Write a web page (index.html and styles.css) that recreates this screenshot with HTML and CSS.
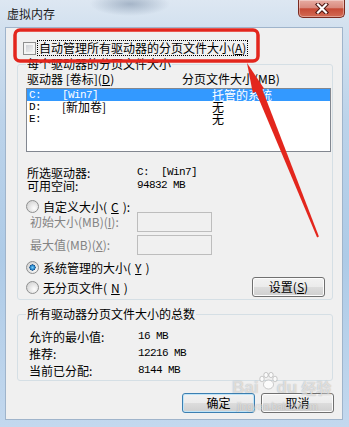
FILE: index.html
```html
<!DOCTYPE html>
<html lang="zh-CN">
<head>
    <meta charset="UTF-8">
    <title>虚拟内存</title>
    <link rel="stylesheet" href="styles.css">
</head>
<body>

    <div class="window">
        <div class="titlebar">
            <span class="title">虚拟内存</span>
            <button class="close" title="关闭">
                <svg width="14" height="11" viewBox="0 0 14 11">
                    <path d="M3 1.5 L11 9.5 M11 1.5 L3 9.5" stroke="#4a1510" stroke-width="4.2" stroke-linecap="square" fill="none"/>
                    <path d="M3 1.5 L11 9.5 M11 1.5 L3 9.5" stroke="#fff" stroke-width="2.2" stroke-linecap="square" fill="none"/>
                </svg>
            </button>
        </div>

        <div class="client">
            <label class="auto-row">
                <span class="checkbox"></span>
                <span class="focus">自动管理所有驱动器的分页文件大小(<u>A</u>)</span>
            </label>

            <!-- Per drive settings -->
            <fieldset class="group">
                <legend>每个驱动器的分页文件大小</legend>
                <div class="list-head">
                    <span class="col-drive">驱动器 [卷标](<u>D</u>)</span>
                    <span>分页文件大小(MB)</span>
                </div>
                <ul class="drive-list">
                    <li class="selected"><span class="d-letter mono">C:</span><span class="d-label mono">[Win7]</span><span>托管的系统</span></li>
                    <li><span class="d-letter mono">D:</span><span class="d-label">[新加卷]</span><span>无</span></li>
                    <li><span class="d-letter mono">E:</span><span class="d-label"></span><span>无</span></li>
                </ul>

                <dl class="info">
                    <dt>所选驱动器:</dt><dd class="mono">C:  [Win7]</dd>
                    <dt>可用空间:</dt><dd class="mono">94832 MB</dd>
                </dl>

                <label class="radio radio-custom"><span class="dot"></span>自定义大小(<u>C</u>):</label>
                <div class="size-fields">
                    <label class="disabled">初始大小(MB)(<u>I</u>):</label>
                    <input type="text" disabled>
                    <label class="disabled">最大值(MB)(<u>X</u>):</label>
                    <input type="text" disabled>
                </div>
                <label class="radio radio-system"><span class="dot checked"></span>系统管理的大小(<u>Y</u>)</label>
                <div class="last-row">
                    <label class="radio"><span class="dot"></span>无分页文件(<u>N</u>)</label>
                    <button class="btn btn-set">设置(<u>S</u>)</button>
                </div>
            </fieldset>

            <!-- Totals -->
            <fieldset class="group totals">
                <legend>所有驱动器分页文件大小的总数</legend>
                <dl class="totals-grid">
                    <dt>允许的最小值:</dt><dd class="mono">16 MB</dd>
                    <dt>推荐:</dt><dd class="mono">12216 MB</dd>
                    <dt>当前已分配:</dt><dd class="mono">8144 MB</dd>
                </dl>
            </fieldset>

            <div class="actions">
                <button class="btn btn-default">确定</button>
                <button class="btn">取消</button>
            </div>
        </div>

        <!-- watermark -->
        <div class="watermark">
            <div class="wm-logo">Bai<svg width="20" height="18" viewBox="0 0 20 18"><g fill="rgba(255,255,255,0.7)" stroke="rgba(120,120,120,0.45)" stroke-width="0.8"><ellipse cx="4" cy="7" rx="2.2" ry="2.8"/><ellipse cx="8" cy="3" rx="2.2" ry="2.6"/><ellipse cx="13" cy="3" rx="2.2" ry="2.6"/><ellipse cx="17" cy="7" rx="2.2" ry="2.8"/><ellipse cx="10.5" cy="12.5" rx="5" ry="4.5"/></g></svg>du<span class="wm-cn">经验</span></div>
            <div class="wm-url">jingyan.baidu.com</div>
        </div>

        <!-- red annotation -->
        <svg class="annotation" width="349" height="427" viewBox="0 0 349 427">
            <rect x="15" y="30" width="243" height="31" rx="5" fill="none" stroke="#e3261d" stroke-width="3.5"/>
            <polygon points="261.3,86.7 254.7,89.3 317.1,237.4 318.9,236.6" fill="#e3261d"/>
            <polygon points="247,63 264,88.6 252.8,93" fill="#e3261d"/>
        </svg>
    </div>

</body>
</html>
```

FILE: styles.css
```css
* {
    box-sizing: border-box;
}
body {
    margin: 0;
    font-family: "Noto Sans CJK SC", "Microsoft YaHei", sans-serif;
    font-size: 12px;
    color: #000;
}
u {
    text-decoration: underline;
}
.mono {
    font-family: "Liberation Mono", "Noto Sans CJK SC", monospace;
    font-size: 11px;
    letter-spacing: -0.6px;
    white-space: pre;
}

/* Window frame */
.window {
    position: relative;
    width: 349px;
    height: 427px;
    display: flex;
    flex-direction: column;
    overflow: hidden;
    background:
        radial-gradient(ellipse 40px 12px at 130px 4px, rgba(120, 140, 165, 0.55), transparent),
        linear-gradient(to bottom, #dde7f2 0, #d3e1ef 26px, #bcd3ea 120px, #aecbe7 60%, #c3d8ee 100%);
}
.titlebar {
    flex: none;
    height: 27px;
    display: flex;
    align-items: flex-start;
    padding-left: 7px;
}
.title {
    margin-top: 6px;
    line-height: 16px;
    color: #1b1b1b;
}
.close {
    margin-left: auto;
    margin-right: 4px;
    width: 47px;
    height: 18px;
    padding: 0;
    border: 1px solid #7a2a20;
    border-top: none;
    border-radius: 0 0 5px 5px;
    background: linear-gradient(#e7aca2, #d98a7e 45%, #c64a36 52%, #d26b55);
    box-shadow: inset 0 0 0 1px rgba(255, 255, 255, 0.35);
    display: flex;
    align-items: center;
    justify-content: center;
}

/* Dialog body */
.client {
    flex: 1;
    margin: 0 6px 7px 5px;
    padding: 12px 9px 0 11px;
    background: #f0f0f0;
    border: 1px solid #9fb4cb;
}
.auto-row {
    display: flex;
    align-items: center;
    height: 16px;
    margin-left: 6px;
}
.checkbox {
    width: 13px;
    height: 13px;
    border: 1px solid #8e8f8f;
    background: linear-gradient(135deg, #c6c9ce, #f8f8f8);
    box-shadow: inset 0 0 0 2px #f4f4f4;
}
.focus {
    margin-left: 1px;
    padding: 0 1px;
    border: 1px dotted #000;
    line-height: 14px;
}

/* Group boxes */
.group {
    margin: 1px 0 0;
    padding: 1px 1px 2px 8px;
    border: 1px solid #d5dfe5;
    border-radius: 3px;
    min-width: 0;
}
.group legend {
    padding: 0 1px;
    line-height: 14px;
}
.totals {
    margin-top: 7px;
    padding-bottom: 1px;
}

.list-head {
    display: flex;
    line-height: 14px;
    padding-left: 1px;
}
.col-drive {
    width: 155px;
}
.drive-list {
    list-style: none;
    margin: 2px 0 0;
    padding: 0;
    height: 64px;
    background: #fff;
    border: 1px solid #828790;
}
.drive-list li {
    display: flex;
    height: 12px;
    line-height: 12px;
    padding-left: 2px;
}
.drive-list li.selected {
    background: #3399ff;
    color: #fff;
}
.d-letter {
    width: 33px;
}
.d-label {
    width: 150px;
}

.info {
    display: grid;
    grid-template-columns: 110px auto;
    margin: 14px 0 0;
    padding-left: 1px;
    line-height: 13px;
}
.info dt, .info dd, .totals-grid dt, .totals-grid dd {
    margin: 0;
}

/* Radios and fields */
.radio {
    display: flex;
    align-items: center;
    gap: 4px;
    height: 13px;
    line-height: 13px;
}
.radio-custom {
    height: 12px;
    margin-top: 8px;
}
.radio-system {
    margin-top: 6px;
}
.dot {
    flex: none;
    width: 13px;
    height: 13px;
    border-radius: 50%;
    border: 1px solid #8e8f8f;
    background: radial-gradient(circle at 65% 65%, #fdfdfd 0, #e6e6e6 45%, #c9c9c9 100%);
}
.dot.checked {
    background:
        radial-gradient(circle at 50% 50%, #7fd0f5 0, #2a8ad0 25%, #184f86 38%, transparent 42%),
        radial-gradient(circle at 65% 65%, #fdfdfd 0, #e6e6e6 45%, #c9c9c9 100%);
}
.size-fields {
    display: grid;
    grid-template-columns: 111px 75px;
    row-gap: 3px;
    align-items: center;
}
.size-fields label {
    padding-left: 4px;
    line-height: 14px;
}
.disabled {
    color: #838383;
}
.size-fields input {
    width: 75px;
    height: 20px;
    margin: 0;
    border: 1px solid #bdbdbd;
    background: #f0f0f0;
}
.last-row {
    display: flex;
    align-items: center;
    justify-content: space-between;
    margin-top: 3px;
}
.btn-set {
    margin-right: 6px;
}

.totals-grid {
    display: grid;
    grid-template-columns: 109px auto;
    margin: 0;
    padding: 6px 0 0 3px;
    line-height: 17px;
}

/* Buttons */
.btn {
    width: 73px;
    height: 20px;
    padding: 0;
    font-family: inherit;
    font-size: 12px;
    line-height: 16px;
    color: #000;
    border: 1px solid #707070;
    border-radius: 3px;
    background: linear-gradient(#f2f2f2 0, #ebebeb 50%, #dddddd 50%, #cfcfcf 100%);
    box-shadow: inset 0 0 0 1px #fcfcfc;
}
.btn-default {
    border-color: #3c7fb1;
    box-shadow: inset 0 0 0 1px #bfe4f8;
}
.actions {
    display: flex;
    justify-content: flex-end;
    gap: 6px;
    margin: 12px -1px 0 0;
}

/* Overlays */
.watermark {
    position: absolute;
    left: 232px;
    top: 372px;
    pointer-events: none;
    color: rgba(255, 255, 255, 0.6);
    text-shadow: 0 0 1px rgba(90, 90, 90, 0.5);
}
.wm-logo {
    display: flex;
    align-items: flex-end;
    font-family: "Liberation Sans", Arial, sans-serif;
    font-weight: bold;
    font-size: 17px;
    line-height: 20px;
}
.wm-logo svg {
    margin: 0 -2px 8px 0;
}
.wm-cn {
    margin-left: 4px;
    font-family: "Noto Sans CJK SC", sans-serif;
    font-size: 15px;
}
.wm-url {
    margin-top: 3px;
    padding-left: 5px;
    font-family: "Liberation Sans", Arial, sans-serif;
    font-size: 10px;
    line-height: 11px;
}
.annotation {
    position: absolute;
    top: 0;
    left: 0;
    pointer-events: none;
}
```
